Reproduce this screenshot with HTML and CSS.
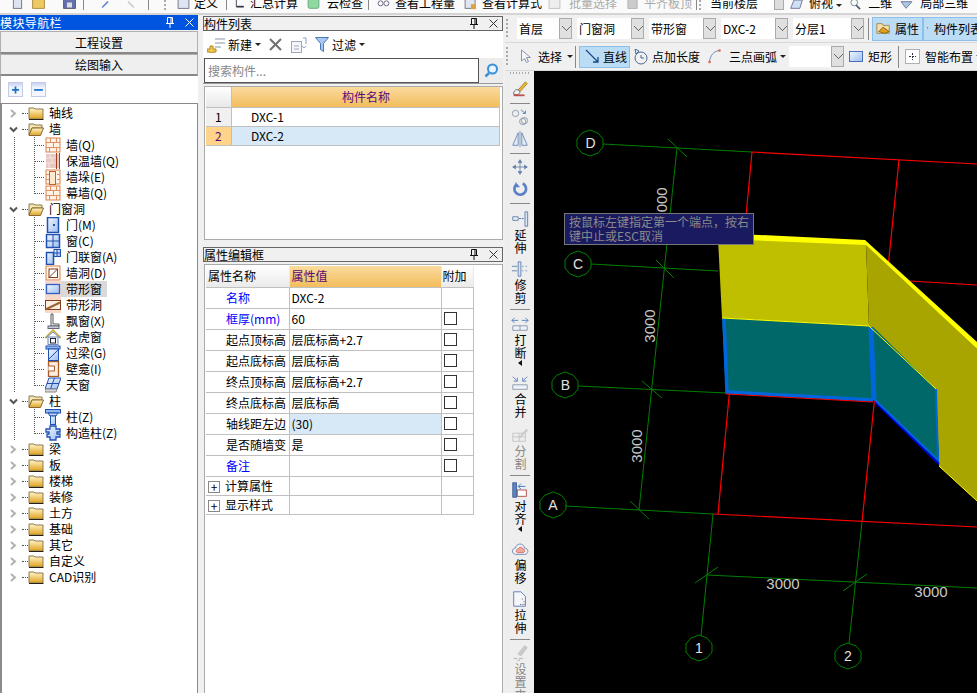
FILE: index.html
```html
<!DOCTYPE html>
<html lang="zh-CN">
<head>
    <meta charset="UTF-8">
    <title>绘图输入</title>
    <link rel="stylesheet" href="styles.css">
</head>
<body>
<svg class="sprites" width="0" height="0">
    <defs>
        <linearGradient id="gFolder" x1="0" y1="0" x2="0" y2="1"><stop offset="0" stop-color="#fff6c8"/><stop offset="1" stop-color="#e0a020"/></linearGradient>
        <linearGradient id="gBlue" x1="0" y1="0" x2="1" y2="1"><stop offset="0" stop-color="#f2f7ff"/><stop offset="1" stop-color="#9dbdf0"/></linearGradient>
        <symbol id="folder" viewBox="0 0 16 16"><path d="M1 3h5l1 1h8v10H1z" fill="url(#gFolder)" stroke="#8a7a50"/><path d="M1 14.500h14.500" stroke="#222"/></symbol>
        <symbol id="folderOpen" viewBox="0 0 16 16"><path d="M1 3h5l1 1h7v3H4L1 14z" fill="#f6e6b0" stroke="#8a7a50"/><path d="M4 7h11.500l-3 7.500H1z" fill="url(#gFolder)" stroke="#8a6a30"/></symbol>
        <symbol id="brick" viewBox="0 0 16 16"><rect x="1" y="1" width="14" height="14" fill="#fff2e6" stroke="#d8824a"/><path d="M1 5.500h14M1 10.500h14M5.500 1v4.500M11.500 1v4.500M8.500 5.500v5M4.500 10.500v4.500M11.500 10.500v4.500" stroke="#e09060" fill="none"/></symbol>
        <symbol id="insul" viewBox="0 0 16 16"><rect x="1" y="1" width="14" height="14" fill="#e8c8c0"/><path d="M1 5h9M1 10h9M5 1v4M7 5v5M4 10v5" stroke="#f4e6e2"/><path d="M11.500 0v16M14.500 0v16" stroke="#a04020" fill="none"/></symbol>
        <symbol id="pier" viewBox="0 0 16 16"><rect x="1" y="1" width="14" height="14" fill="#fff2e6" stroke="#d8824a"/><path d="M1 5.500h3M12 5.500h3M1 10.500h3M12 10.500h3" stroke="#e09060"/><rect x="4.500" y="2.500" width="6" height="13" fill="#fde8d0" stroke="#c8602a"/></symbol>
        <symbol id="door" viewBox="0 0 16 16"><rect x="2.500" y="0.500" width="11" height="15" fill="url(#gBlue)" stroke="#2050b0" stroke-width="1.500"/><rect x="8" y="7" width="2" height="2" fill="#2050b0"/></symbol>
        <symbol id="win" viewBox="0 0 16 16"><rect x="1.500" y="1.500" width="13" height="13" fill="url(#gBlue)" stroke="#2050b0" stroke-width="1.500"/><path d="M8 1.500v13M1.500 8h13" stroke="#2050b0"/></symbol>
        <symbol id="doorwin" viewBox="0 0 16 16"><rect x="1.500" y="3.500" width="7" height="12" fill="url(#gBlue)" stroke="#2050b0" stroke-width="1.500"/><rect x="9" y="0.500" width="6.500" height="7" fill="url(#gBlue)" stroke="#2050b0"/><path d="M12 0.500v7M9 4h6.500" stroke="#2050b0"/></symbol>
        <symbol id="hole" viewBox="0 0 16 16"><rect x="1" y="1" width="14" height="14" fill="#fff2e6" stroke="#d8824a"/><rect x="4" y="4" width="8.500" height="8.500" fill="#fff" stroke="#804020"/><path d="M4 12.500l8.500-8.500" stroke="#804020"/></symbol>
        <symbol id="bandwin" viewBox="0 0 16 16"><rect x="0" y="0" width="16" height="16" fill="#f4d8d0"/><rect x="1.500" y="3.500" width="13" height="9" fill="url(#gBlue)" stroke="#3060c0" stroke-width="1.300"/></symbol>
        <symbol id="bandhole" viewBox="0 0 16 16"><rect x="0" y="0" width="16" height="16" fill="#f8d8c8"/><rect x="0.500" y="3.500" width="15" height="9" fill="#fbeee2" stroke="#804020"/><path d="M0.500 12.500L15 5.500" stroke="#a06030" stroke-width="2"/></symbol>
        <symbol id="bay" viewBox="0 0 16 16"><path d="M6 1h2v10h6v2H6z" fill="#fff" stroke="#555"/><rect x="3" y="13" width="11" height="2.500" fill="#c8d0e0" stroke="#667"/></symbol>
        <symbol id="dormer" viewBox="0 0 16 16"><path d="M0 9L8 1l8 8" fill="none" stroke="#d0a838" stroke-width="1.500"/><path d="M1 9l7-6 7 6" fill="none" stroke="#7088b8"/><rect x="3" y="8" width="10" height="7.500" fill="#eef2fa" stroke="#7088b8"/><rect x="5.500" y="9.500" width="5" height="4.500" fill="#fff" stroke="#223"/></symbol>
        <symbol id="lintel" viewBox="0 0 16 16"><rect x="1" y="1" width="14" height="3" fill="#90b8f0" stroke="#2050b0"/><rect x="3.500" y="4" width="10" height="11.500" fill="url(#gBlue)" stroke="#2050b0"/><path d="M4 14L13 5" stroke="#2050b0"/></symbol>
        <symbol id="niche" viewBox="0 0 16 16"><rect x="3.500" y="0.500" width="10" height="15" fill="#fdeedd" stroke="#a85a28" stroke-width="1.300"/><path d="M3.500 5h6v5h-6" fill="#fff" stroke="#a85a28"/></symbol>
        <symbol id="sky" viewBox="0 0 16 16"><path d="M4 1h12l-4 11H0z" fill="url(#gBlue)" stroke="#2050b0"/><path d="M2 6.500h12M9.500 1l-4 11" stroke="#2050b0"/><path d="M0 12h12l-1 3H0z" fill="#d8d8d8" stroke="#888"/></symbol>
        <symbol id="col" viewBox="0 0 16 16"><rect x="0.500" y="0.500" width="15" height="3.500" fill="#90b8f0" stroke="#2050b0"/><path d="M3 4h10l-2 3H5z" fill="#c0d4f4" stroke="#2050b0"/><rect x="5.500" y="7" width="5" height="8.500" fill="url(#gBlue)" stroke="#2050b0"/></symbol>
        <symbol id="gzz" viewBox="0 0 16 16"><path d="M5 1h6v3h4v3h-3v2h3v3h-4v3H5v-3H2V9h2V7H1V4h4z" fill="url(#gBlue)" stroke="#2050b0" stroke-width="1.300"/></symbol>
    </defs>
</svg>

<div class="app">
    <!-- top toolbar, only its lower edge is in view -->
    <div class="topbar">
        <svg class="top-ico s-12" viewBox="0 0 12 12"><rect x="1" y="-4" width="10" height="14" fill="#dde4f0" stroke="#667"/></svg>
        <svg class="top-ico s-33" viewBox="0 0 14 12"><rect x="0" y="-4" width="14" height="14" fill="#eec860" stroke="#a08030"/></svg>
        <svg class="top-ico s-64" viewBox="0 0 14 12"><rect x="0" y="-4" width="14" height="14" fill="#6870b0" stroke="#445"/><rect x="4" y="3" width="6" height="6" fill="#ddd"/></svg>
        <span class="top-sep s-85"></span>
        <svg class="top-ico s-100" viewBox="0 0 12 12"><path d="M2 9L9 2" stroke="#6a8ad0" stroke-width="2"/></svg>
        <svg class="top-ico s-125" viewBox="0 0 12 12"><path d="M10 9L3 2" stroke="#ccc" stroke-width="2"/></svg>
        <span class="top-sep s-150"></span>
        <span class="top-grip s-166"></span>
        <svg class="top-ico s-175" viewBox="0 0 15 12"><rect x="1" y="-4" width="13" height="14" fill="#dfe6f2" stroke="#667"/></svg>
        <span class="top-txt s-193">定义</span>
        <span class="top-sep s-225"></span>
        <svg class="top-ico s-233" viewBox="0 0 12 12"><path d="M1 8h9" stroke="#334" stroke-width="2"/><path d="M1 0v8" stroke="#334"/></svg>
        <span class="top-txt s-250">汇总计算</span>
        <svg class="top-ico s-306" viewBox="0 0 15 12"><rect x="1" y="-4" width="13" height="14" rx="2" fill="#8fd8a0" stroke="#60a070"/></svg>
        <span class="top-txt s-327">云检查</span>
        <span class="top-sep s-368"></span>
        <svg class="top-ico s-376" viewBox="0 0 15 12"><circle cx="4" cy="4" r="3" fill="none" stroke="#557"/><circle cx="11" cy="4" r="3" fill="none" stroke="#557"/></svg>
        <span class="top-txt s-395">查看工程量</span>
        <svg class="top-ico s-463" viewBox="0 0 15 12"><rect x="1" y="-2" width="12" height="12" fill="#dfe6f2" stroke="#667"/><rect x="8" y="5" width="6" height="6" fill="#e0a040"/></svg>
        <span class="top-txt s-482">查看计算式</span>
        <svg class="top-ico s-548" viewBox="0 0 15 12"><rect x="1" y="-2" width="13" height="12" fill="#eee" stroke="#bbb"/></svg>
        <span class="top-txt off s-569">批量选择</span>
        <svg class="top-ico s-625" viewBox="0 0 15 12"><rect x="2" y="-2" width="11" height="12" fill="#ccc" stroke="#aaa"/></svg>
        <span class="top-txt off s-645">平齐板顶</span>
        <span class="top-sep s-697"></span>
        <span class="top-grip s-700"></span>
        <span class="top-combo s-708"><span>当前楼层</span><i></i></span>
        <svg class="top-ico s-790" viewBox="0 0 16 12"><path d="M1 10l4-10h10l-3 10z" fill="#cfe0f4" stroke="#668"/></svg>
        <span class="top-txt s-810">俯视</span><i class="caret top-caret"></i>
        <svg class="top-ico s-850" viewBox="0 0 15 12"><circle cx="6" cy="3" r="4" fill="none" stroke="#587"/><path d="M8 6l5 5" stroke="#557" stroke-width="2"/></svg>
        <span class="top-txt s-870">二维</span>
        <svg class="top-ico s-900" viewBox="0 0 15 12"><path d="M1 2l6 8 7-8z" fill="#a8c8e8" stroke="#668"/></svg>
        <span class="top-txt s-920">局部三维</span>
    </div>

    <div class="main">
        <!-- module navigation -->
        <div class="nav">
            <div class="nav-title">
                <span>模块导航栏</span>
                <svg class="pin" viewBox="0 0 10 11"><path d="M2.500 0.500h5v6h-5zM1 6.500h8M5 7v4M6 1v5" fill="none" stroke="#fff"/></svg>
                <svg class="close" viewBox="0 0 9 9"><path d="M0.500 0.500l8 8M8.500 0.500l-8 8" stroke="#fff"/></svg>
            </div>
            <div class="nav-btn">工程设置</div>
            <div class="nav-btn second">绘图输入</div>
            <div class="nav-tools">
                <span class="sq-btn"><svg viewBox="0 0 15 15"><path d="M7.500 4v8M3.500 8h8" stroke="#1a70c8" stroke-width="2"/></svg></span>
                <span class="sq-btn"><svg viewBox="0 0 15 15"><path d="M2.500 8h10" stroke="#1a70c8" stroke-width="2"/></svg></span>
            </div>
            <div class="tree">
                <div class="row"><svg class="chev" viewBox="0 0 9 9"><path d="M2 1l4 3.500L2 8" fill="none" stroke="#b0b0b0" stroke-width="2"/></svg><span class="dots"></span><svg class="ico"><use href="#folder"/></svg><span class="lbl">轴线</span></div>

                <div class="row"><svg class="chev" viewBox="0 0 9 9"><path d="M1 2.500L4.500 6 8 2.500" fill="none" stroke="#555" stroke-width="2"/></svg><span class="dots"></span><svg class="ico"><use href="#folderOpen"/></svg><span class="lbl">墙</span></div>
                <div class="kids">
                    <div class="kid"><span class="dots"></span><svg class="ico"><use href="#brick"/></svg><span class="lbl">墙(Q)</span></div>
                    <div class="kid"><span class="dots"></span><svg class="ico"><use href="#insul"/></svg><span class="lbl">保温墙(Q)</span></div>
                    <div class="kid"><span class="dots"></span><svg class="ico"><use href="#pier"/></svg><span class="lbl">墙垛(E)</span></div>
                    <div class="kid"><span class="dots"></span><svg class="ico"><use href="#brick"/></svg><span class="lbl">幕墙(Q)</span></div>
                </div>

                <div class="row"><svg class="chev" viewBox="0 0 9 9"><path d="M1 2.500L4.500 6 8 2.500" fill="none" stroke="#555" stroke-width="2"/></svg><span class="dots"></span><svg class="ico"><use href="#folderOpen"/></svg><span class="lbl">门窗洞</span></div>
                <div class="kids">
                    <div class="kid"><span class="dots"></span><svg class="ico"><use href="#door"/></svg><span class="lbl">门(M)</span></div>
                    <div class="kid"><span class="dots"></span><svg class="ico"><use href="#win"/></svg><span class="lbl">窗(C)</span></div>
                    <div class="kid"><span class="dots"></span><svg class="ico"><use href="#doorwin"/></svg><span class="lbl">门联窗(A)</span></div>
                    <div class="kid"><span class="dots"></span><svg class="ico"><use href="#hole"/></svg><span class="lbl">墙洞(D)</span></div>
                    <div class="kid"><span class="dots"></span><span class="picked"><svg class="ico"><use href="#bandwin"/></svg><span class="lbl">带形窗</span></span></div>
                    <div class="kid"><span class="dots"></span><svg class="ico"><use href="#bandhole"/></svg><span class="lbl">带形洞</span></div>
                    <div class="kid"><span class="dots"></span><svg class="ico"><use href="#bay"/></svg><span class="lbl">飘窗(X)</span></div>
                    <div class="kid"><span class="dots"></span><svg class="ico"><use href="#dormer"/></svg><span class="lbl">老虎窗</span></div>
                    <div class="kid"><span class="dots"></span><svg class="ico"><use href="#lintel"/></svg><span class="lbl">过梁(G)</span></div>
                    <div class="kid"><span class="dots"></span><svg class="ico"><use href="#niche"/></svg><span class="lbl">壁龛(I)</span></div>
                    <div class="kid"><span class="dots"></span><svg class="ico"><use href="#sky"/></svg><span class="lbl">天窗</span></div>
                </div>

                <div class="row"><svg class="chev" viewBox="0 0 9 9"><path d="M1 2.500L4.500 6 8 2.500" fill="none" stroke="#555" stroke-width="2"/></svg><span class="dots"></span><svg class="ico"><use href="#folderOpen"/></svg><span class="lbl">柱</span></div>
                <div class="kids">
                    <div class="kid"><span class="dots"></span><svg class="ico"><use href="#col"/></svg><span class="lbl">柱(Z)</span></div>
                    <div class="kid"><span class="dots"></span><svg class="ico"><use href="#gzz"/></svg><span class="lbl">构造柱(Z)</span></div>
                </div>

                <div class="row"><svg class="chev" viewBox="0 0 9 9"><path d="M2 1l4 3.500L2 8" fill="none" stroke="#b0b0b0" stroke-width="2"/></svg><span class="dots"></span><svg class="ico"><use href="#folder"/></svg><span class="lbl">梁</span></div>
                <div class="row"><svg class="chev" viewBox="0 0 9 9"><path d="M2 1l4 3.500L2 8" fill="none" stroke="#b0b0b0" stroke-width="2"/></svg><span class="dots"></span><svg class="ico"><use href="#folder"/></svg><span class="lbl">板</span></div>
                <div class="row"><svg class="chev" viewBox="0 0 9 9"><path d="M2 1l4 3.500L2 8" fill="none" stroke="#b0b0b0" stroke-width="2"/></svg><span class="dots"></span><svg class="ico"><use href="#folder"/></svg><span class="lbl">楼梯</span></div>
                <div class="row"><svg class="chev" viewBox="0 0 9 9"><path d="M2 1l4 3.500L2 8" fill="none" stroke="#b0b0b0" stroke-width="2"/></svg><span class="dots"></span><svg class="ico"><use href="#folder"/></svg><span class="lbl">装修</span></div>
                <div class="row"><svg class="chev" viewBox="0 0 9 9"><path d="M2 1l4 3.500L2 8" fill="none" stroke="#b0b0b0" stroke-width="2"/></svg><span class="dots"></span><svg class="ico"><use href="#folder"/></svg><span class="lbl">土方</span></div>
                <div class="row"><svg class="chev" viewBox="0 0 9 9"><path d="M2 1l4 3.500L2 8" fill="none" stroke="#b0b0b0" stroke-width="2"/></svg><span class="dots"></span><svg class="ico"><use href="#folder"/></svg><span class="lbl">基础</span></div>
                <div class="row"><svg class="chev" viewBox="0 0 9 9"><path d="M2 1l4 3.500L2 8" fill="none" stroke="#b0b0b0" stroke-width="2"/></svg><span class="dots"></span><svg class="ico"><use href="#folder"/></svg><span class="lbl">其它</span></div>
                <div class="row"><svg class="chev" viewBox="0 0 9 9"><path d="M2 1l4 3.500L2 8" fill="none" stroke="#b0b0b0" stroke-width="2"/></svg><span class="dots"></span><svg class="ico"><use href="#folder"/></svg><span class="lbl">自定义</span></div>
                <div class="row"><svg class="chev" viewBox="0 0 9 9"><path d="M2 1l4 3.500L2 8" fill="none" stroke="#b0b0b0" stroke-width="2"/></svg><span class="dots"></span><svg class="ico"><use href="#folder"/></svg><span class="lbl">CAD识别</span></div>
            </div>
        </div>

        <!-- component list and property editor -->
        <div class="mid">
            <div class="pane-title">
                <span>构件列表</span>
                <svg class="pin" viewBox="0 0 10 11"><path d="M2.500 0.500h5v6h-5zM1 6.500h8M5 7v4M6 1v5" fill="none" stroke="#111"/></svg>
                <svg class="close" viewBox="0 0 9 9"><path d="M0.500 0.500l8 8M8.500 0.500l-8 8" stroke="#333"/></svg>
            </div>
            <div class="list-tools">
                <svg class="lt-new" viewBox="0 0 18 16"><path d="M8 2h10M8 6h10M8 10h6" stroke="#8a96a8"/><path d="M3 9h3v3h3v3H6v1H3v-1H0v-3h3z" fill="#f0c850" stroke="#b08820"/></svg>
                <span class="lt-txt">新建</span><i class="caret"></i>
                <svg class="lt-del" viewBox="0 0 13 13"><path d="M1 1l11 11M12 1L1 12" stroke="#707070" stroke-width="2"/></svg>
                <svg class="lt-copy" viewBox="0 0 16 16"><rect x="0.500" y="4.500" width="10" height="11" fill="#f4f6fa" stroke="#a0a8b8"/><path d="M3 9h5M3 12h5" stroke="#a0a8b8"/><path d="M12 1h3v6M15 9l-2 2-2-2" fill="none" stroke="#88a0c8"/></svg>
                <svg class="lt-filter" viewBox="0 0 14 15"><path d="M0.500 0.500h13l-5 6v8l-3-2v-6z" fill="#a8c8f0" stroke="#4878b8"/></svg>
                <span class="lt-txt">过滤</span><i class="caret"></i>
            </div>
            <div class="search">
                <div class="search-box">搜索构件...</div>
                <div class="search-btn"><svg viewBox="0 0 15 15"><circle cx="8.500" cy="6" r="4.500" fill="#e8f4ff" stroke="#3a90d8" stroke-width="2"/><path d="M5 10l-3.500 3.500" stroke="#3a90d8" stroke-width="2.500"/></svg></div>
            </div>
            <div class="list-box">
                <div class="list-grid">
                    <div class="lg-corner"></div>
                    <div class="lg-head">构件名称</div>
                    <div class="lg-idx">1</div>
                    <div class="lg-name">DXC-1</div>
                    <div class="lg-idx cur">2</div>
                    <div class="lg-name cur">DXC-2</div>
                </div>
            </div>

            <div class="pane-title second">
                <span>属性编辑框</span>
                <svg class="pin" viewBox="0 0 10 11"><path d="M2.500 0.500h5v6h-5zM1 6.500h8M5 7v4M6 1v5" fill="none" stroke="#111"/></svg>
                <svg class="close" viewBox="0 0 9 9"><path d="M0.500 0.500l8 8M8.500 0.500l-8 8" stroke="#333"/></svg>
            </div>
            <div class="prop-box">
                <table class="prop">
                    <colgroup><col class="c-name"><col class="c-val"><col class="c-add"></colgroup>
                    <tr class="head"><th class="h-name">属性名称</th><th class="h-val">属性值</th><th class="h-add">附加</th></tr>
                    <tr><td class="pn blue">名称</td><td class="pv">DXC-2</td><td></td></tr>
                    <tr><td class="pn blue">框厚(mm)</td><td class="pv">60</td><td><span class="check"></span></td></tr>
                    <tr><td class="pn">起点顶标高</td><td class="pv">层底标高+2.7</td><td><span class="check"></span></td></tr>
                    <tr><td class="pn">起点底标高</td><td class="pv">层底标高</td><td><span class="check"></span></td></tr>
                    <tr><td class="pn">终点顶标高</td><td class="pv">层底标高+2.7</td><td><span class="check"></span></td></tr>
                    <tr><td class="pn">终点底标高</td><td class="pv">层底标高</td><td><span class="check"></span></td></tr>
                    <tr><td class="pn">轴线距左边</td><td class="pv cur">(30)</td><td><span class="check"></span></td></tr>
                    <tr><td class="pn">是否随墙变</td><td class="pv">是</td><td><span class="check"></span></td></tr>
                    <tr><td class="pn blue">备注</td><td class="pv"></td><td><span class="check"></span></td></tr>
                    <tr class="fold"><td><span class="plus">+</span>计算属性</td><td></td><td></td></tr>
                    <tr class="fold"><td><span class="plus">+</span>显示样式</td><td></td><td></td></tr>
                </table>
            </div>
        </div>

        <!-- drawing area with its toolbars -->
        <div class="work">
            <div class="bar first">
                <span class="grip"></span>
                <span class="combo w-43"><span>首层</span><i></i></span>
                <span class="combo w-55"><span>门窗洞</span><i></i></span>
                <span class="combo w-55"><span>带形窗</span><i></i></span>
                <span class="combo w-55"><span>DXC-2</span><i></i></span>
                <span class="combo w-58"><span>分层1</span><i></i></span>
                <span class="bar-sep"></span>
                <span class="toggle w-prop">
                    <svg viewBox="0 0 17 15"><path d="M1 2h6l1 2h7v9H1z" fill="#f4e0a8" stroke="#a08040"/><path d="M3 11l5-5 7 5-5 2z" fill="#e0a020" stroke="#806010"/></svg>属性
                </span>
                <span class="toggle w-list">
                    <svg viewBox="0 0 17 15"><path d="M1.500 2h3v3h-3zM1.500 7h3v3h-3zM1.500 12h3v2h-3z" fill="none" stroke="#445" stroke-dasharray="1 1"/><rect x="7.500" y="1.500" width="8" height="12" fill="#fff" stroke="#4870a8"/><path d="M9 5h5M9 8h5M9 11h5" stroke="#4870a8"/></svg>构件列表
                </span>
            </div>
            <div class="bar second">
                <span class="grip"></span>
                <span class="tool t-select">
                    <svg viewBox="0 0 12 15"><path d="M1.500 1v11l3-2.500 2 4 2-1-2-4h4z" fill="#f4f6fa" stroke="#8a96a8"/></svg>选择<i class="caret"></i>
                </span>
                <span class="bar-sep tight"></span>
                <span class="tool active t-line">
                    <svg viewBox="0 0 15 15"><path d="M1 1l12 12M13 8v5H8" fill="none" stroke="#1a4a8a" stroke-width="1.300"/></svg>直线
                </span>
                <span class="tool t-len">
                    <svg viewBox="0 0 16 16"><circle cx="8" cy="9" r="6" fill="none" stroke="#48689a"/><path d="M8 6v3h3M2 0l4 2-3 3z" fill="none" stroke="#48689a"/></svg>点加长度
                </span>
                <span class="tool t-arc">
                    <svg viewBox="0 0 13 15"><path d="M1.500 13.500C2 6 6 2 11.500 1.500" fill="none" stroke="#6a88b8"/><circle cx="1.500" cy="13" r="1.300" fill="#d86850"/><circle cx="11.500" cy="1.500" r="1.300" fill="#d86850"/></svg>三点画弧<i class="caret"></i>
                </span>
                <span class="combo t-blank"><span></span><i></i></span>
                <span class="tool t-rect">
                    <svg viewBox="0 0 14 11"><rect x="0.500" y="0.500" width="13" height="10" fill="url(#gBlue)" stroke="#4870b8"/></svg>矩形
                </span>
                <span class="bar-sep t-sep2"></span>
                <span class="tool t-smart">
                    <svg viewBox="0 0 15 15"><rect x="0.500" y="0.500" width="14" height="14" fill="#fff" stroke="#667" stroke-dasharray="1 1"/><path d="M7.500 4v7M4 7.500h7" stroke="#334" stroke-dasharray="2 1"/></svg>智能布置<i class="caret"></i>
                </span>
            </div>
            <div class="stage">
                <div class="vbar">
                    <span class="vgrip"></span>
                    <div class="vtool"><svg viewBox="0 0 20 20"><path d="M8 11l8-9 2 2-8 9z" fill="#e8b838" stroke="#a88020"/><path d="M3 14c1-3 3-4 5-3l2 2c0 3-3 4-7 3z" fill="#f0f0f0" stroke="#667"/><path d="M3 17h12" stroke="#c05050" stroke-width="2"/></svg></div>
                    <span class="vsep"></span>
                    <div class="vtool"><svg viewBox="0 0 20 20"><circle cx="5" cy="6" r="3.500" fill="none" stroke="#8a96a8"/><circle cx="13" cy="15" r="3.500" fill="none" stroke="#8a96a8"/><circle cx="15" cy="14" r="3.500" fill="none" stroke="#8a96a8"/><path d="M11 2l5 4M16 3v3h-3" fill="none" stroke="#5878b0"/></svg></div>
                    <div class="vtool mt2"><svg viewBox="0 0 20 20"><path d="M8 3L2 17h6zM12 3l6 14h-6z" fill="#e4ecf8" stroke="#6888b8"/><path d="M10 1v18" stroke="#8a96a8"/></svg></div>
                    <span class="vsep"></span>
                    <div class="vtool"><svg viewBox="0 0 20 20"><path d="M10 2v16M2 10h16M10 2l-2 3h4zM10 18l-2-3h4zM2 10l3-2v4zM18 10l-3-2v4z" fill="#6a84ac" stroke="#6a84ac"/></svg></div>
                    <div class="vtool mt2"><svg viewBox="0 0 20 20"><path d="M13 4a6.500 6.500 0 1 1-7 1" fill="none" stroke="#5a80c8" stroke-width="3"/><path d="M5 2v6h5z" fill="#5a80c8"/></svg></div>
                    <span class="vsep"></span>
                    <div class="vtool mt2"><svg viewBox="0 0 20 20"><path d="M15.500 2h3v16h-3z" fill="#d8e4f4" stroke="#6080b0"/><path d="M2 7.500h6v4H2z" fill="none" stroke="#6080b0"/><path d="M9 9.500h5" stroke="#405880" stroke-dasharray="2 1"/></svg><span class="vtxt">延伸</span></div>
                    <div class="vtool"><svg viewBox="0 0 20 20"><path d="M8 2h3v16H8z" fill="#d8e4f4" stroke="#6080b0"/><path d="M1 7h6M1 12h6" stroke="#6080b0"/><path d="M12 7h7M12 12h7" stroke="#88a0c8" stroke-dasharray="2 2"/></svg><span class="vtxt">修剪</span></div>
                    <span class="vsep"></span>
                    <div class="vtool mt1"><svg viewBox="0 0 20 20"><path d="M1 6h7M4 3L1 6l3 3M19 6h-7M16 3l3 3-3 3" fill="none" stroke="#5880c0"/><path d="M2 12h16v5H2zM10 12v5" fill="#eef2fa" stroke="#8a96a8"/></svg><span class="vtxt">打断</span><i class="vcaret"></i></div>
                    <div class="vtool mt7"><svg viewBox="0 0 20 20"><path d="M2 3l5 5M7 4v4H3M18 3l-5 5M13 4v4h4" fill="none" stroke="#5880c0"/><path d="M2 12h16v5H2z" fill="#eef2fa" stroke="#8a96a8"/></svg><span class="vtxt">合并</span></div>
                    <div class="vtool mt6 off"><svg viewBox="0 0 20 20"><path d="M2 8h14v9H2zM2 12h14M9 8v9" fill="none" stroke="#c4c4c4"/><path d="M8 13L17 3l2 2-9 9z" fill="#ccc"/></svg><span class="vtxt">分割</span></div>
                    <span class="vsep"></span>
                    <div class="vtool mt1"><svg viewBox="0 0 20 20"><rect x="2" y="2" width="4" height="16" fill="#5a86c8" stroke="#3a5a90"/><rect x="7" y="10" width="10" height="7" fill="#fff" stroke="#b04848"/><path d="M16 6H8M11 3L8 6l3 3" fill="none" stroke="#3a70c0"/></svg><span class="vtxt">对齐</span><i class="vcaret"></i></div>
                    <div class="vtool mt7"><svg viewBox="0 0 20 20"><path d="M5 16c-5-1-4-7 0-7 0-5 9-7 10 0 5 0 5 7 0 7z" fill="#eef2fa" stroke="#7088b0"/><path d="M7 14c-2-1-1-4 1-4 1-3 5-2 5 0 3 0 3 4 0 4z" fill="#f0a8a0" stroke="#d86850"/></svg><span class="vtxt">偏移</span></div>
                    <div class="vtool"><svg viewBox="0 0 20 20"><path d="M3 2h8l5 5v11H3z" fill="#f4f6fa" stroke="#5878b0"/><path d="M12 10h1M14 13h1M10 16h6" stroke="#445" stroke-dasharray="1 1"/></svg><span class="vtxt">拉伸</span></div>
                    <span class="vsep"></span>
                    <div class="vtool off"><svg viewBox="0 0 20 20"><path d="M8 11L15 2l3 2-7 9z" fill="#ccc" stroke="#bbb"/><path d="M3 16h4M9 16h4M7 18h3" stroke="#aaa"/></svg><span class="vtxt long">设置夹点</span></div>
                </div>
                <div class="canvas">
                    <svg class="cad" viewBox="534 72 443 621" xmlns="http://www.w3.org/2000/svg">
                        <!-- red grid behind the wall -->
                        <g class="red">
                            <path d="M752 153L977 165"/>
                            <path d="M752 153L718 515"/>
                            <path d="M899 161L862 523"/>
                            <path d="M910 282L977 286"/>
                            <path d="M713 515L977 528"/>
                        </g>
                        <!-- green axes -->
                        <g class="green">
                            <path d="M603 145L752 153"/>
                            <path d="M591 265L718 272"/>
                            <path d="M578 387L726 394"/>
                            <path d="M565 507L713 515"/>
                            <path d="M677 149L639 511"/>
                            <path d="M713 515L701 637"/>
                            <path d="M862 523L849 644"/>
                            <path d="M707 576L977 589"/>
                            <path d="M668 140L687 158M656 261L674 279M642 382L662 399M630 502L649 520M695 584L718 568M843 592L867 575"/>
                        </g>
                        <!-- wall and band window -->
                        <polygon points="718,239 866,245 869,327 722,319" fill="#bfbf00"/>
                        <polygon points="866,245 977,350 977,502 939,467 936,390 869,327" fill="#a8a400"/>
                        <polygon points="722,319 869,327 873,402 726,394" fill="#006868"/>
                        <polygon points="873,328 936,390 939,463 875,402" fill="#006868"/>
                        <path d="M724 320L727 393L873 401" fill="none" stroke="#0066dd" stroke-width="3.500"/>
                        <path d="M871 328L874 401" fill="none" stroke="#0066dd" stroke-width="5"/>
                        <path d="M875 403L939 465" fill="none" stroke="#0000dd" stroke-width="2"/>
                        <path d="M874 400L938 461L936 390" fill="none" stroke="#0066dd" stroke-width="2"/>
                        <path d="M722 319L869 327L936 390" fill="none" stroke="#ffff00"/>
                        <path d="M939 467L977 502" fill="none" stroke="#ffff00"/>
                        <polygon points="718,234 865,241 977,343 977,350 866,246 718,240" fill="#ffff00"/>
                        <path d="M726 395L873 403" stroke="#ff0000"/>
                        <!-- axis bubbles -->
                        <g class="bubble">
                            <polygon points="590,131 598,134 603,140 603,148 598,154 590,157 582,154 577,148 577,140 582,134"/>
                            <polygon points="578,252 586,255 591,261 591,269 586,275 578,278 570,275 565,269 565,261 570,255"/>
                            <polygon points="565,373 573,376 578,382 578,390 573,396 565,399 557,396 552,390 552,382 557,376"/>
                            <polygon points="553,493 561,496 566,502 566,510 561,516 553,519 545,516 540,510 540,502 545,496"/>
                            <polygon points="699,636 707,639 712,645 712,653 707,659 699,662 691,659 686,653 686,645 691,639"/>
                            <polygon points="848,644 856,647 861,653 861,661 856,667 848,670 840,667 835,661 835,653 840,647"/>
                        </g>
                        <g class="axis-name">
                            <text x="590.500" y="149">D</text>
                            <text x="578" y="270">C</text>
                            <text x="565.500" y="391">B</text>
                            <text x="553" y="511">A</text>
                            <text x="699" y="654">1</text>
                            <text x="848" y="662">2</text>
                        </g>
                        <g class="dim">
                            <text x="783" y="590">3000</text>
                            <text x="931" y="598">3000</text>
                            <text transform="translate(655 327) rotate(-90)">3000</text>
                            <text transform="translate(642 447) rotate(-90)">3000</text>
                            <text transform="translate(667 205) rotate(-90)">3000</text>
                        </g>
                    </svg>
                    <div class="tip">按鼠标左键指定第一个端点，按右键中止或ESC取消</div>
                </div>
            </div>
        </div>
    </div>
</div>
</body>
</html>
```

FILE: styles.css
```css
:root {
    --panel: #f0f0f0;
    --line: #c0c0c0;
    --head-top: #fadb9f;
    --head-bottom: #f2bd5c;
    --current: #d7e8f6;
}

* {
    box-sizing: border-box;
}

body {
    margin: 0;
    background-color: var(--panel);
    color: #000;
    font-family: "Noto Sans CJK SC", "Liberation Sans", sans-serif;
    font-size: 12px;
    line-height: 16px;
}

.sprites {
    display: block;
}

.app {
    width: 977px;
    height: 693px;
    overflow: hidden;
    display: flex;
    flex-direction: column;
}

/* top toolbar: text is cut by the window edge */
.topbar {
    height: 15px;
    flex: none;
    display: flex;
    align-items: flex-end;
    overflow: hidden;
    padding-bottom: 3px;
    border-bottom: 2px solid #d4d4d4;
    background-color: #fafafa;
}

.top-ico {
    flex: none;
    width: 15px;
    height: 10px;
}

.top-txt {
    flex: none;
    line-height: 16px;
    margin-bottom: -1px;
    white-space: nowrap;
}

.top-txt.off {
    color: #aaa;
}

.top-sep {
    flex: none;
    width: 1px;
    height: 12px;
    background-color: #888;
}

.top-grip {
    flex: none;
    width: 2px;
    height: 10px;
    background-image: linear-gradient(#aaa 50%, transparent 50%);
    background-size: 2px 4px;
}

.top-combo {
    flex: none;
    width: 77px;
    height: 14px;
    display: flex;
    justify-content: space-between;
    align-items: flex-end;
    background-color: #fff;
    padding-left: 3px;
}

.top-combo span {
    margin-bottom: -1px;
}

.top-combo i {
    width: 10px;
    height: 12px;
    background-color: #ddd;
    border: 1px solid #aaa;
}

.top-caret {
    align-self: center;
}

.s-12 { margin-left: 10px; }
.s-33 { margin-left: 6px; }
.s-64 { margin-left: 16px; }
.s-85 { margin-left: 6px; }
.s-100 { margin-left: 14px; }
.s-125 { margin-left: 10px; }
.s-150 { margin-left: 10px; }
.s-166 { margin-left: 15px; }
.s-175 { margin-left: 10px; }
.s-193 { margin-left: 3px; }
.s-225 { margin-left: 8px; }
.s-233 { margin-left: 6px; }
.s-250 { margin-left: 2px; }
.s-306 { margin-left: 8px; }
.s-327 { margin-left: 6px; }
.s-368 { margin-left: 5px; }
.s-376 { margin-left: 7px; }
.s-395 { margin-left: 4px; }
.s-463 { margin-left: 8px; }
.s-482 { margin-left: 4px; }
.s-548 { margin-left: 5px; }
.s-569 { margin-left: 7px; }
.s-625 { margin-left: 8px; }
.s-645 { margin-left: 4px; }
.s-697 { margin-left: 4px; }
.s-700 { margin-left: 2px; }
.s-708 { margin-left: 6px; }
.s-790 { margin-left: 5px; }
.s-810 { margin-left: 5px; }
.s-850 { margin-left: 6px; }
.s-870 { margin-left: 5px; }
.s-900 { margin-left: 7px; }
.s-920 { margin-left: 6px; }

.main {
    flex: 1;
    min-height: 0;
    display: flex;
}

/* left navigation */
.nav {
    width: 198px;
    flex: none;
    display: flex;
    flex-direction: column;
}

.nav-title {
    height: 15px;
    flex: none;
    display: flex;
    align-items: center;
    background-color: #0055e0;
    color: #fff;
    letter-spacing: 0.4px;
}

.nav-title span,
.pane-title span {
    flex: 1;
}

.pin {
    width: 10px;
    height: 11px;
    flex: none;
}

.close {
    width: 9px;
    height: 9px;
    flex: none;
    margin: 0 4px 0 10px;
}

.nav-btn {
    height: 23px;
    margin-top: 1px;
    flex: none;
    line-height: 21px;
    text-align: center;
    background-color: #efefef;
    border: 1px solid #b0b0b0;
    border-bottom: 2px solid #888;
}

.nav-btn.second {
    margin-top: 0;
    height: 22px;
    line-height: 20px;
}

.nav-tools {
    height: 27px;
    flex: none;
    display: flex;
    align-items: center;
    gap: 8px;
    padding-left: 7px;
    background-color: #fff;
    border-left: 1px solid #aaa;
}

.sq-btn {
    width: 15px;
    height: 15px;
    background: linear-gradient(#c8d4f0, #eef2fc 35%, #f6f8ff);
    border: 1px solid #c0cce8;
}

.sq-btn svg {
    display: block;
    width: 13px;
    height: 13px;
}

.tree {
    flex: 1;
    min-height: 0;
    background-color: #fff;
    border: 1px solid #8a8a8a;
    border-left-width: 2px;
    border-bottom: 0;
    padding-top: 1px;
}

.row,
.kid {
    height: 16px;
    display: flex;
    align-items: center;
    white-space: nowrap;
}

.row {
    padding-left: 7px;
}

.chev {
    width: 9px;
    height: 9px;
    flex: none;
}

.row .dots {
    width: 6px;
    margin-left: 4px;
}

.dots {
    flex: none;
    height: 0;
    border-top: 1px dotted #555;
}

.ico {
    width: 16px;
    height: 16px;
    flex: none;
}

.lbl {
    margin-left: 5px;
}

/* dotted tree lines are 1px gradients, the last child stops half way */
.kids {
    padding-left: 32px;
    background-image: linear-gradient(#555 50%, transparent 50%);
    background-size: 1px 2px;
    background-repeat: repeat-y;
    background-position: 12px 0;
}

.kid {
    background-image: linear-gradient(#555 50%, transparent 50%);
    background-size: 1px 2px;
    background-repeat: repeat-y;
}

.kid:last-child {
    background:
        linear-gradient(#fff, #fff) 0 8px / 1px 8px no-repeat,
        linear-gradient(#555 50%, transparent 50%) 0 0 / 1px 2px repeat-y;
}

.kid .dots {
    width: 10px;
    margin-right: 1px;
}

.picked {
    display: flex;
    align-items: center;
    padding-right: 5px;
    background-color: #d9d9d9;
}

/* middle column */
.mid {
    width: 300px;
    flex: none;
    margin-left: 5px;
    display: flex;
    flex-direction: column;
}

.pane-title {
    height: 15px;
    flex: none;
    margin-top: 1px;
    display: flex;
    align-items: center;
    background-color: #f0f0f0;
    border: 1px solid #666;
}

.pane-title.second {
    margin-top: 7px;
}

.list-tools {
    height: 27px;
    flex: none;
    display: flex;
    align-items: center;
    padding-left: 4px;
    background-color: #fff;
}

.lt-new {
    width: 18px;
    height: 16px;
    flex: none;
}

.lt-txt {
    margin-left: 3px;
}

.caret {
    flex: none;
    width: 0;
    height: 0;
    margin-left: 3px;
    border-top: 3px solid #222;
    border-left: 3px solid transparent;
    border-right: 3px solid transparent;
}

.lt-del {
    width: 13px;
    height: 13px;
    flex: none;
    margin-left: 8px;
}

.lt-copy {
    width: 16px;
    height: 16px;
    flex: none;
    margin-left: 9px;
}

.lt-filter {
    width: 14px;
    height: 15px;
    flex: none;
    margin-left: 8px;
}

.search {
    height: 26px;
    flex: none;
    display: flex;
    border-bottom: 1px solid #999;
}

.search-box {
    width: 275px;
    margin-left: 1px;
    height: 25px;
    padding-left: 3px;
    line-height: 23px;
    color: #888;
    background-color: #fff;
    border: 1px solid #555;
}

.search-btn {
    flex: 1;
    display: flex;
    align-items: center;
    justify-content: center;
    background-color: #ececec;
}

.search-btn svg {
    width: 15px;
    height: 15px;
}

.list-box {
    height: 154px;
    flex: none;
    margin: 2px 0 0 1px;
    padding: 0 2px 2px 1px;
    background-color: #fff;
    border: 1px solid #aaa;
}

.list-grid {
    display: grid;
    grid-template-columns: 25px 1fr;
    grid-template-rows: 21px 19px 19px;
    line-height: 18px;
}

.lg-corner {
    background: linear-gradient(#fff, #e8e8e8);
    border-bottom: 1px solid var(--line);
}

.lg-head {
    text-align: center;
    line-height: 20px;
    color: #5a0a78;
    background: linear-gradient(var(--head-top), var(--head-bottom));
    border-left: 1px solid var(--line);
    border-bottom: 1px solid var(--line);
}

.lg-idx {
    padding-left: 9px;
    background-color: #f0f0f0;
    border-bottom: 1px solid var(--line);
}

.lg-idx.cur {
    background-color: #ffd38a;
    color: #5a0a78;
}

.lg-name {
    padding-left: 19px;
    border-left: 1px solid var(--line);
    border-right: 1px solid var(--line);
    border-bottom: 1px solid var(--line);
}

.lg-name.cur {
    background-color: var(--current);
}

.prop-box {
    flex: 1;
    min-height: 0;
    margin: 2px 0 0 1px;
    padding: 1px;
    background-color: #fff;
    border: 1px solid #aaa;
    border-bottom: 0;
}

.prop {
    table-layout: fixed;
    width: 267px;
    border-collapse: collapse;
}

.c-name { width: 83px; }
.c-val { width: 152px; }
.c-add { width: 32px; }

.prop th,
.prop td {
    height: 21px;
    padding: 0;
    font-weight: 400;
    text-align: left;
    white-space: nowrap;
    overflow: hidden;
    border: 1px solid var(--line);
}

.prop .head th {
    border-top: 0;
    border-left: 0;
    border-right-color: #e8e8e8;
}

.prop .h-name {
    padding-left: 2px;
    background: linear-gradient(#fff, #eaeaea);
}

.prop .h-val {
    padding-left: 2px;
    color: #5a0a78;
    background: linear-gradient(var(--head-top), var(--head-bottom));
}

.prop .h-add {
    padding-left: 1px;
    background: linear-gradient(#fff, #eaeaea);
}

.prop .pn {
    padding-left: 20px;
    border-left: 0;
}

.pn.blue {
    color: #0000ff;
}

.prop .pv {
    padding-left: 2px;
}

.prop .pv.cur {
    background-color: var(--current);
}

.check {
    display: block;
    width: 13px;
    height: 13px;
    margin-left: 2px;
    background-color: #fff;
    border: 1px solid #333;
}

.prop .fold td {
    height: 19px;
    border-left: 0;
}

.prop .fold td + td {
    border-left: 1px solid var(--line);
}

.plus {
    display: inline-block;
    width: 12px;
    height: 12px;
    margin: 0 5px 0 2px;
    line-height: 9px;
    text-align: center;
    vertical-align: -1px;
    background-color: #fff;
    border: 1px solid #888;
}

/* right side */
.work {
    flex: 1;
    min-width: 0;
    margin-left: 2px;
    display: flex;
    flex-direction: column;
}

.bar {
    height: 28px;
    flex: none;
    display: flex;
    align-items: center;
    white-space: nowrap;
    overflow: hidden;
    background-color: #f0f0f0;
    border-bottom: 1px solid #d8d8d8;
}

.grip {
    flex: none;
    width: 2px;
    height: 20px;
    margin-left: 1px;
    background-image: linear-gradient(#aaa 50%, transparent 50%);
    background-size: 2px 4px;
}

.combo {
    flex: none;
    height: 21px;
    display: flex;
    align-items: center;
    justify-content: space-between;
    padding-left: 2px;
    background-color: #fff;
}

.bar .combo + .combo {
    margin-left: 5px;
}

.combo i {
    width: 13px;
    height: 21px;
    flex: none;
    border: 1px solid #aaa;
    background:
        linear-gradient(45deg, transparent 43%, #666 43%, #666 57%, transparent 57%) 2px 7px / 5px 5px no-repeat,
        linear-gradient(-45deg, transparent 43%, #666 43%, #666 57%, transparent 57%) 6px 7px / 5px 5px no-repeat,
        #e0e0e0;
}

.w-43 { width: 55px; margin-left: 9px; }
.w-55 { width: 67px; }
.w-58 { width: 71px; }

.bar-sep {
    flex: none;
    width: 1px;
    height: 22px;
    margin: 0 3px 0 4px;
    background-color: #888;
}

.toggle {
    flex: none;
    height: 24px;
    display: flex;
    align-items: center;
    background-color: #bbdcf5;
    border: 1px solid #8cc0ea;
}

.toggle svg {
    width: 15px;
    height: 15px;
    margin: 0 4px 0 3px;
}

.w-prop { width: 51px; }
.w-list { width: 60px; }
.w-list svg { margin-right: 5px; }

.tool {
    flex: none;
    display: flex;
    align-items: center;
}

.tool svg {
    flex: none;
}

.t-select { margin-left: 12px; }
.t-select svg { width: 12px; height: 15px; margin-right: 6px; }
.t-select .caret { margin-left: 5px; }
.bar-sep.tight { margin: 0 3px 0 2px; }
.tool.active {
    height: 22px;
    background-color: #bbdcf5;
    border: 1px solid #8cc0ea;
}
.t-line { width: 51px; padding-left: 5px; }
.t-line svg { width: 15px; height: 15px; margin-right: 3px; }
.t-len { margin-left: 3px; }
.t-len svg { width: 16px; height: 16px; margin-right: 3px; }
.t-arc { margin-left: 8px; }
.t-arc svg { width: 13px; height: 15px; margin-right: 8px; }
.combo.t-blank { width: 55px; margin-left: 3px; }
.t-rect { margin-left: 5px; }
.t-rect svg { width: 14px; height: 11px; margin-right: 5px; }
.bar-sep.t-sep2 { margin-left: 6px; margin-right: 6px; }
.t-smart svg { width: 15px; height: 15px; margin-right: 5px; }

.stage {
    flex: 1;
    min-height: 0;
    display: flex;
}

.vbar {
    width: 29px;
    flex: none;
    padding-left: 1px;
    overflow: hidden;
    display: flex;
    flex-direction: column;
    align-items: center;
    background-color: #eeeeee;
}

.vgrip {
    flex: none;
    width: 20px;
    height: 8px;
    background-image: linear-gradient(90deg, #aaa 50%, transparent 50%);
    background-size: 3px 2px;
    background-repeat: repeat-x;
    background-position: 0 1px;
}

.vsep {
    flex: none;
    width: 20px;
    height: 8px;
    background: linear-gradient(#888, #888) 0 4px / 20px 1px no-repeat;
}

.vtool {
    flex: none;
    width: 26px;
    display: flex;
    flex-direction: column;
    align-items: center;
}

.vtool svg {
    width: 18px;
    height: 20px;
    flex: none;
}

.vtxt {
    flex: none;
    height: 26px;
    writing-mode: vertical-rl;
    line-height: 14px;
    letter-spacing: 1px;
    white-space: nowrap;
}

.vtxt.long {
    height: 52px;
}

.vtool.off {
    color: #888;
}

.vtool + .vtool {
    margin-top: 4px;
}

.vtool.mt1 { margin-top: 1px; }
.vtool.mt2 { margin-top: 2px; }
.vtool.mt6 { margin-top: 6px; }
.vtool.mt7 { margin-top: 7px; }

.vcaret {
    flex: none;
    width: 0;
    height: 0;
    border-right: 4px solid #111;
    border-top: 3px solid transparent;
    border-bottom: 3px solid transparent;
}

/* black drawing canvas */
.canvas {
    flex: 1;
    min-width: 0;
    position: relative;
    overflow: hidden;
    background-color: #000;
}

.cad {
    display: block;
    width: 443px;
    height: 621px;
}

.red path {
    fill: none;
    stroke: #ff0000;
    stroke-width: 1.200;
}

.green path {
    fill: none;
    stroke: #008000;
    stroke-width: 1;
}

.bubble polygon {
    fill: none;
    stroke: #008000;
}

.axis-name text {
    fill: #e0e0e0;
    font-family: "Liberation Sans", sans-serif;
    font-size: 14px;
    text-anchor: middle;
}

.dim text {
    fill: #c8c8c8;
    font-family: "Liberation Sans", sans-serif;
    font-size: 15px;
    text-anchor: middle;
}

.tip {
    position: absolute;
    left: 30px;
    top: 142px;
    width: 190px;
    height: 32px;
    padding: 1px 0 0 4px;
    font-size: 12px;
    line-height: 14px;
    color: #8a8a8a;
    background-color: #1a1a60;
    border: 1px solid #777;
}
```
